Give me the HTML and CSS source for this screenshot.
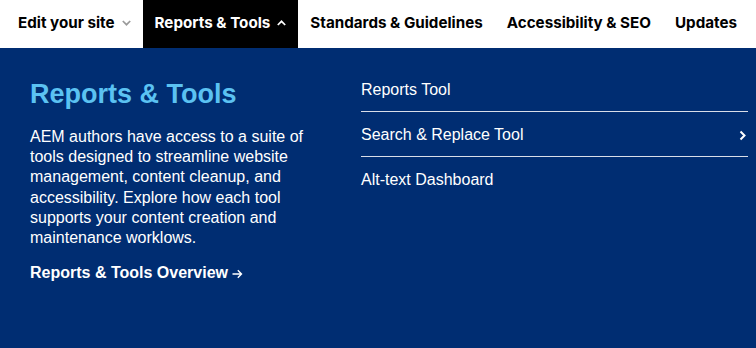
FILE: index.html
```html
<!DOCTYPE html>
<html lang="en">
<head>
<meta charset="utf-8">
<title>Reports &amp; Tools</title>
<link rel="stylesheet" href="styles.css">
</head>
<body>
<nav class="nav">
  <ul class="nav-list">
    <li class="nav-item"><a href="#">Edit your site</a>
      <svg class="caret caret-down" width="9" height="6" viewBox="0 0 9 6"><path d="M0.8 1 L4.5 4.7 L8.2 1" fill="none" stroke="currentColor" stroke-width="1.7"/></svg>
    </li>
    <li class="nav-item active"><a href="#">Reports &amp; Tools</a>
      <svg class="caret" width="9" height="6" viewBox="0 0 9 6"><path d="M0.8 5 L4.5 1.3 L8.2 5" fill="none" stroke="currentColor" stroke-width="1.7"/></svg>
    </li>
    <li class="nav-item"><a href="#">Standards &amp; Guidelines</a></li>
    <li class="nav-item"><a href="#">Accessibility &amp; SEO</a></li>
    <li class="nav-item"><a href="#">Updates</a></li>
  </ul>
</nav>
<section class="panel">
  <div class="intro">
    <h2 class="intro-title">Reports &amp; Tools</h2>
    <p class="intro-text">AEM authors have access to a suite of tools designed to streamline website management, content cleanup, and accessibility. Explore how each tool supports your content creation and maintenance worklows.</p>
    <a class="overview" href="#">Reports &amp; Tools Overview<svg class="arrow" width="11" height="10" viewBox="0 0 11 10"><path d="M0.5 5 H9.5 M5.8 1.3 L9.5 5 L5.8 8.7" fill="none" stroke="currentColor" stroke-width="1.4"/></svg></a>
  </div>
  <ul class="links">
    <li class="link"><a href="#">Reports Tool</a></li>
    <li class="link"><a href="#">Search &amp; Replace Tool</a>
      <svg class="chev" width="7" height="11" viewBox="0 0 7 11"><path d="M1.5 1.5 L5.5 5.5 L1.5 9.5" fill="none" stroke="currentColor" stroke-width="2"/></svg>
    </li>
    <li class="link"><a href="#">Alt-text Dashboard</a></li>
  </ul>
</section>
</body>
</html>
```

FILE: styles.css
```css
* { box-sizing: border-box; }
html, body { margin: 0; padding: 0; }
body {
  width: 756px;
  height: 348px;
  overflow: hidden;
  background: #002d72;
  font-family: "Liberation Sans", Arial, sans-serif;
}
a { color: inherit; text-decoration: none; }
ul { list-style: none; margin: 0; padding: 0; }

.nav {
  background: #ffffff;
  height: 48px;
  padding-left: 6px;
  overflow: hidden;
}
.nav-list {
  display: flex;
  height: 48px;
  align-items: stretch;
}
.nav-item {
  display: flex;
  flex-shrink: 0;
  white-space: nowrap;
  align-items: center;
  gap: 7px;
  padding: 0 12px 3px;
  font-family: Inter, "Liberation Sans", sans-serif;
  font-weight: 700;
  font-size: 15.2px;
  letter-spacing: 0;
  color: #000;
}
.nav-item.active {
  background: #000;
  color: #fff;
}
.caret { display: block; }
.caret-down { color: #9a9a9a; }

.panel {
  display: grid;
  grid-template-columns: 305px 387px;
  column-gap: 26px;
  padding: 19px 0 0 30px;
  color: #fff;
}
.intro-title {
  margin: 0 0 6px;
  font-size: 27px;
  line-height: 54px;
  font-weight: 700;
  color: #5bc2f2;
}
.intro-text {
  margin: 0;
  font-size: 16px;
  line-height: 20.2px;
}
.overview {
  display: inline-flex;
  align-items: center;
  gap: 4px;
  margin-top: 15px;
  font-size: 16px;
  font-weight: 700;
  line-height: 20px;
}
.arrow { display: block; margin-top: 1px; }

.link {
  display: flex;
  align-items: center;
  justify-content: space-between;
  padding: 13px 2px 11px 0;
  font-size: 16px;
  line-height: 20px;
  border-bottom: 1px solid #d8dde8;
}
.link:last-child { border-bottom: none; }
.chev { display: block; }
```
